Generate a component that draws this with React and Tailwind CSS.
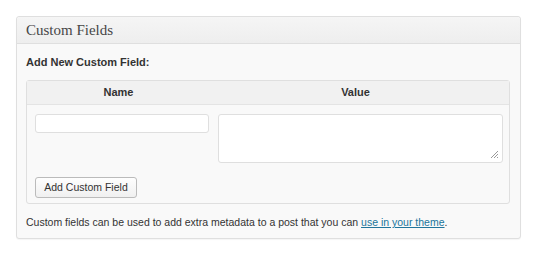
import React from 'react';

// Resize grip drawn in the textarea's corner
const Grip = () => (
  <svg width="9" height="9" viewBox="0 0 9 9" className="absolute right-[3px] bottom-[3px]">
    <path d="M8 1 L1 8 M8 4 L4 8 M8 7 L7 8" stroke="#9a9a9a" strokeWidth="1" />
  </svg>
);

const CustomFields = () => {
  return (
    <div className="w-[505px] h-[223px] border border-[#dfdfdf] rounded-[3px] bg-[#f9f9f9] shadow-[0_1px_1px_rgba(0,0,0,0.04)]">
      <div className="h-[27px] pl-[9px] flex items-center border-b border-[#dfdfdf] bg-gradient-to-b from-[#f5f5f5] to-[#eeeeee] rounded-t-[3px]">
        <h3 className="text-[15px] text-[#464646] font-['Liberation_Serif',serif] leading-none pt-[1px]">
          Custom Fields
        </h3>
      </div>
      <div className="px-[9px] font-['Liberation_Sans',Arial,sans-serif]">
        <p className="mt-[11px] text-[11px] font-bold text-[#333] leading-[14px]">Add New Custom Field:</p>
        <div className="mt-[11px] w-[484px] h-[124px] border border-[#dfdfdf] rounded-[3px] bg-[#f9f9f9]">
          <div className="grid grid-cols-[183px_1fr] h-[24px] items-center bg-[#f1f1f1] border-b border-[#e4e4e4] text-[11px] font-bold text-[#333]">
            <div className="text-center">Name</div>
            <div className="text-center pr-[8px]">Value</div>
          </div>
          <div className="flex pl-[8px] pr-[6px] pt-[9px] gap-[9px]">
            <input className="w-[174px] h-[19px] bg-white border border-[#dfdfdf] rounded-[3px] outline-none" />
            <div className="relative flex-1 h-[49px] bg-white border border-[#dfdfdf] rounded-[3px]">
              <Grip />
            </div>
          </div>
          <div className="pl-[8px] mt-[11px]">
            <button className="w-[102px] h-[21px] bg-gradient-to-b from-[#fefefe] to-[#f0f0f0] border border-[#bbbbbb] rounded-[3px] text-[10.5px] text-[#333] leading-none">
              Add Custom Field
            </button>
          </div>
        </div>
        <p className="mt-[11px] text-[10.5px] text-[#333] leading-[14px]">
          Custom fields can be used to add extra metadata to a post that you can{' '}
          <a href="#" className="text-[#21759b] underline">use in your theme</a>.
        </p>
      </div>
    </div>
  );
};

export default function App() {
  return (
    <div className="w-[535px] h-[254px] bg-white pt-[16px] pl-[16px]">
      <CustomFields />
    </div>
  );
}
